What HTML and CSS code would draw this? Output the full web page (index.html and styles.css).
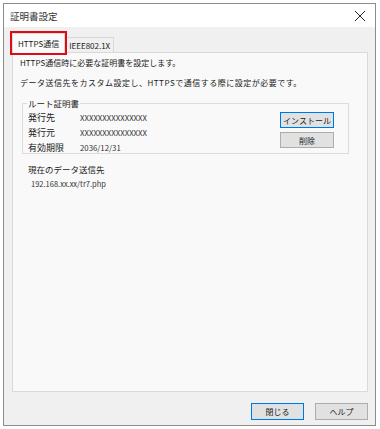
FILE: index.html
```html
<!DOCTYPE html>
<html lang="ja">
<head>
    <meta charset="UTF-8">
    <title>証明書設定</title>
    <link rel="stylesheet" href="styles.css">
</head>
<body>
    <div class="window">
        <div class="titlebar">
            <span class="title">証明書設定</span>
            <svg class="close" width="12" height="12" viewBox="0 0 12 12">
                <path d="M1 1 L11 11 M11 1 L1 11" stroke="#222" stroke-width="1" fill="none"/>
            </svg>
        </div>
        <div class="content">
            <div class="tabs">
                <div class="tab selected">HTTPS通信</div>
                <div class="tab">IEEE802.1X</div>
            </div>
            <div class="panel">
                <p class="line">HTTPS通信時に必要な証明書を設定します。</p>
                <p class="line wide-line">データ送信先をカスタム設定し、HTTPSで通信する際に設定が必要です。</p>
                <fieldset class="group">
                    <legend>ルート証明書</legend>
                    <div class="group-body">
                        <div class="info">
                            <div class="row"><span class="label">発行先</span><span class="value">XXXXXXXXXXXXXXX</span></div>
                            <div class="row"><span class="label">発行元</span><span class="value">XXXXXXXXXXXXXXX</span></div>
                            <div class="row"><span class="label">有効期限</span><span class="value">2036/12/31</span></div>
                        </div>
                        <div class="side-buttons">
                            <button class="btn default">インストール</button>
                            <button class="btn">削除</button>
                        </div>
                    </div>
                </fieldset>
                <div class="current">
                    <div class="current-title">現在のデータ送信先</div>
                    <div class="current-url">192.168.xx.xx/tr7.php</div>
                </div>
            </div>
            <div class="footer">
                <button class="btn wide default">閉じる</button>
                <button class="btn wide">ヘルプ</button>
            </div>
        </div>
    </div>
</body>
</html>
```

FILE: styles.css
```css
body {
    margin: 0;
    background: #ffffff;
    font-family: "Noto Sans CJK JP", "Noto Sans", sans-serif;
    color: #1a1a1a;
}

.window {
    margin: 3px 0 0 3px;
    width: 371px;
    height: 421px;
    border: 1px solid #8c8c8c;
    background: #f0f0f0;
    display: flex;
    flex-direction: column;
}

.titlebar {
    height: 23px;
    background: #ffffff;
    display: flex;
    align-items: center;
    justify-content: space-between;
    padding: 0 9px 0 6px;
}

.title {
    font-size: 9.5px;
    color: #333;
}

.content {
    flex: 1;
    padding: 5px 7px 0 8px;
    display: flex;
    flex-direction: column;
}

.tabs {
    display: flex;
    align-items: flex-end;
    height: 20px;
}

.tab {
    font-size: 8px;
    height: 15px;
    line-height: 15px;
    padding: 0 3px;
    border: 1px solid #d9d9d9;
    border-bottom: none;
    background: #f0f0f0;
    margin-bottom: -1px;
}

.tab.selected {
    position: relative;
    height: 19px;
    line-height: 19px;
    padding: 0 5px;
    background: #f9f9f9;
    z-index: 1;
    outline: 2px solid #e00a14;
    outline-offset: 0;
}

.panel {
    height: 334px;
    border: 1px solid #d9d9d9;
    background: #f9f9f9;
    padding: 4px 7px 0 7px;
}

.line {
    margin: 0 0 8px 0;
    font-size: 8px;
    line-height: 12px;
}

.wide-line {
    letter-spacing: 0.5px;
}

.group {
    margin: 0 11px 0 2px;
    padding: 0 14px 4px 5px;
    border: 1px solid #dcdcdc;
    height: 51px;
}

.group legend {
    font-size: 8.5px;
    padding: 0 1px;
    margin-left: -1px;
}

.group-body {
    display: flex;
    justify-content: space-between;
}

.info {
    padding-top: 1px;
}

.row {
    display: flex;
    height: 15px;
    align-items: center;
}

.label {
    width: 52px;
    font-size: 9px;
}

.value {
    font-size: 7.8px;
    color: #333;
}

.side-buttons {
    display: flex;
    flex-direction: column;
    gap: 4px;
    padding-top: 3px;
}

.btn {
    font-family: inherit;
    font-size: 8px;
    width: 54px;
    height: 16px;
    padding: 0;
    background: #e1e1e1;
    border: 1px solid #adadad;
    color: #1a1a1a;
}

.btn.default {
    border: 1px solid #0078d7;
    box-shadow: inset 0 0 0 1px #cfe4f7;
}

.current {
    padding: 9px 0 0 8px;
}

.current-title {
    font-size: 8.5px;
    line-height: 13px;
}

.current-url {
    font-size: 7.5px;
    color: #333;
    padding: 2px 0 0 3px;
}

.footer {
    display: flex;
    justify-content: flex-end;
    gap: 11px;
    padding-top: 11px;
}

.btn.wide {
    width: 53px;
    height: 17px;
}
```
